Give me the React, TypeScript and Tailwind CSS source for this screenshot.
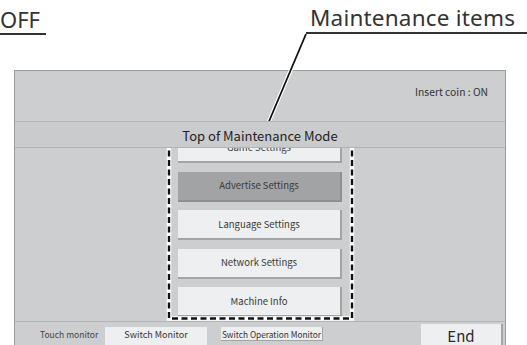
import React from "react";

const items = [
  "Game Settings",
  "Advertise Settings",
  "Language Settings",
  "Network Settings",
  "Machine Info",
];

export default function App() {
  return (
    <div
      className="relative w-[527px] h-[345px] overflow-hidden bg-white text-[#2a2a2a]"
      style={{ fontFamily: '"Noto Sans", "Noto Sans CJK JP", sans-serif' }}
    >
      {/* annotation row */}
      <div className="flex h-[70px] items-start justify-between">
        <div className="mt-[5px] w-[46px] border-b-2 border-[#333] text-[22px] leading-[28px] text-[#333]">
          OFF
        </div>
        <div className="mt-[4px] w-[221px] border-b-2 border-[#333] pl-[4px] text-[22.5px] leading-[28px] tracking-[0.2px] text-[#333]">
          Maintenance items
        </div>
      </div>

      {/* screen panel */}
      <div
        className="ml-[14px] w-[492px] border border-[#9c9d9f] bg-[#cdcecf]"
        style={{ fontFamily: '"Noto Sans CJK JP", "Noto Sans", sans-serif' }}
      >
        <div className="flex h-[50px] items-start justify-end pr-[17px] pt-[13px] text-[10.3px] leading-[16px] text-[#333]">
          Insert coin : ON
        </div>
        <div className="relative z-10 flex h-[27px] items-center justify-center border-y border-[#b3b4b6] bg-[#cacbcd] pt-[2px] text-[13px] text-[#222]">
          Top of Maintenance Mode
        </div>
        <div className="flex h-[173px] flex-col items-center gap-[8.5px] overflow-hidden">
          {items.map((t, i) => (
            <div
              key={t}
              className={
                "flex h-[30px] w-[164px] shrink-0 items-center justify-center border-b-2 border-r-2 text-[9.5px] text-[#3a3a3a] " +
                (i === 0 ? "-mt-[15px] " : "") +
                (i === 1
                  ? "border-[#8e8f91] bg-[#a2a3a5]"
                  : "border-[#a3a4a6] bg-[#eeeff0]")
              }
            >
              {t}
            </div>
          ))}
        </div>
        <div className="flex h-[28px] items-start border-t border-[#b3b4b6]">
          <div className="ml-[25px] mt-[5px] w-[64px] whitespace-nowrap text-[8.5px] leading-[14px] text-[#444]">
            Touch monitor
          </div>
          <div className="ml-[1px] mt-[5px] flex h-[22px] w-[102px] items-start justify-center bg-[#eeeff0] pt-[1px] text-[9px] leading-[14px] text-[#333]">
            Switch Monitor
          </div>
          <div className="ml-[14px] mt-[5px] flex h-[14px] w-[102px] items-center justify-center whitespace-nowrap border-b border-r border-[#a3a4a6] bg-[#eeeff0] text-[8.3px] leading-[14px] text-[#333]">
            Switch Operation Monitor
          </div>
          <div className="ml-[98px] mt-[2px] flex h-[24px] w-[82px] items-center justify-center border-r-2 border-[#a3a4a6] bg-[#eeeff0] text-[15px] text-[#2a2a2a]">
            End
          </div>
        </div>
      </div>

      {/* annotation overlay drawings */}
      <svg
        className="pointer-events-none absolute left-0 top-0"
        width="527"
        height="345"
      >
        <line x1="306" y1="34" x2="259" y2="145" stroke="white" strokeWidth="4" />
        <line x1="306" y1="34" x2="259" y2="145" stroke="#111" strokeWidth="1.8" />
        <rect x="169" y="143.5" width="183" height="175" fill="none" stroke="white" strokeWidth="4.5" />
        <rect
          x="169"
          y="143.5"
          width="183"
          height="175"
          fill="none"
          stroke="#111"
          strokeWidth="2.4"
          strokeDasharray="6 3.5"
        />
      </svg>
    </div>
  );
}
